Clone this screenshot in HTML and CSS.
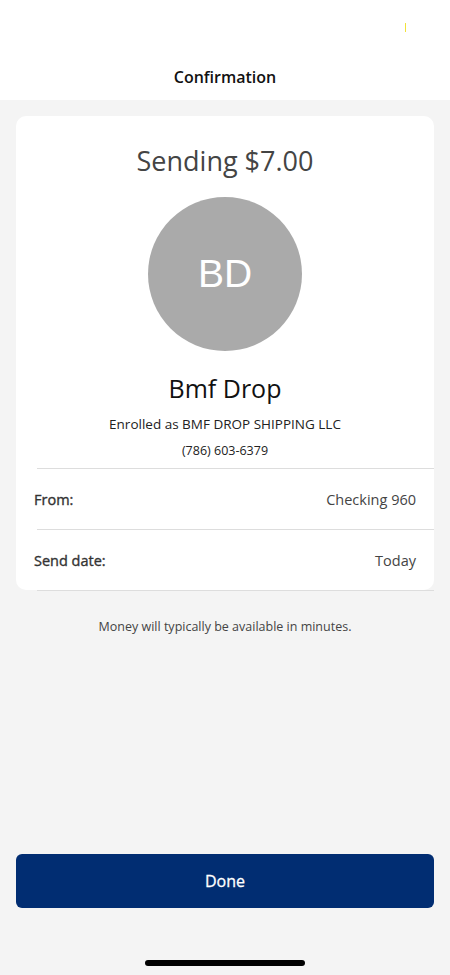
FILE: index.html
```html
<!DOCTYPE html>
<html lang="en">
<head>
<meta charset="UTF-8">
<title>Confirmation</title>
<link rel="stylesheet" href="styles.css">
</head>
<body>
<div id="app">
  <div id="header">
    <div class="status-bar"><span class="status-dot"></span></div>
    <h1 id="title">Confirmation</h1>
  </div>

  <div id="content">
    <div class="card">
      <div class="amount">Sending $7.00</div>
      <div class="avatar">BD</div>
      <div class="payee-name">Bmf Drop</div>
      <div class="enrolled">Enrolled as BMF DROP SHIPPING LLC</div>
      <div class="phone">(786) 603-6379</div>
      <ul class="detail-list">
        <li class="detail-row"><span class="detail-label">From:</span><span class="detail-value">Checking 960</span></li>
        <li class="detail-row"><span class="detail-label">Send date:</span><span class="detail-value">Today</span></li>
      </ul>
    </div>
    <p class="note">Money will typically be available in minutes.</p>
  </div>

  <div id="footer">
    <button class="done-button">Done</button>
    <div class="home-indicator"></div>
  </div>
</div>
</body>
</html>
```

FILE: styles.css
```css
html, body {
  margin: 0;
  padding: 0;
  height: 100%;
}
body {
  font-family: "Open Sans", Arial, sans-serif;
  background-color: #f4f4f4;
  color: #222;
}
#app {
  display: flex;
  flex-direction: column;
  height: 975px;
}
#header {
  background-color: #fff;
  height: 100px;
  display: flex;
  flex-direction: column;
}
.status-bar {
  height: 60px;
  display: flex;
  justify-content: flex-end;
  padding-right: 44px;
}
.status-dot {
  width: 1px;
  height: 9px;
  margin-top: 23px;
  background-color: #f2e23a;
}
#title {
  margin: 0;
  text-align: center;
  font-size: 16px;
  font-weight: 600;
  color: #111;
  line-height: 34px;
}
#content {
  flex: 1;
  padding: 16px 16px 0;
}
.card {
  background-color: #fff;
  border-radius: 10px;
  padding-top: 26px;
  display: flex;
  flex-direction: column;
  align-items: center;
}
.amount {
  font-size: 27px;
  color: #444;
  line-height: 38px;
}
.avatar {
  width: 154px;
  height: 154px;
  border-radius: 50%;
  background-color: #aaa;
  color: #fff;
  font-family: "Liberation Sans", Arial, sans-serif;
  font-size: 39px;
  display: flex;
  align-items: center;
  justify-content: center;
  margin-top: 17px;
}
.payee-name {
  font-size: 25px;
  color: #111;
  margin-top: 19px;
  line-height: 36px;
}
.enrolled {
  font-size: 13.5px;
  margin-top: 8px;
  line-height: 20px;
}
.phone {
  font-size: 12.5px;
  margin-top: 7px;
  line-height: 20px;
}
.detail-list {
  list-style: none;
  margin: 7px 0 -1px;
  padding: 0 0 0 21px;
  align-self: stretch;
}
.detail-row {
  display: flex;
  justify-content: space-between;
  align-items: center;
  height: 60px;
  border-top: 1px solid #ddd;
  padding-right: 18px;
}
.detail-row:last-child {
  border-bottom: 1px solid #ddd;
}
.detail-label {
  font-size: 14.5px;
  color: #333;
  margin-left: -3px;
  -webkit-text-stroke: 0.35px #333;
}
.detail-value {
  font-size: 14.5px;
  color: #444;
}
.note {
  text-align: center;
  font-size: 12.5px;
  color: #444;
  margin: 28px 0 0;
}
#footer {
  padding: 0 16px;
  display: flex;
  flex-direction: column;
  align-items: center;
}
.done-button {
  width: 100%;
  height: 54px;
  background-color: #012d72;
  color: #fff;
  border: none;
  border-radius: 6px;
  font-family: "Open Sans", Arial, sans-serif;
  font-size: 16px;
  -webkit-text-stroke: 0.3px #fff;
}
.home-indicator {
  width: 160px;
  height: 6px;
  border-radius: 3px;
  background-color: #000;
  margin: 52px 0 9px;
}
```
